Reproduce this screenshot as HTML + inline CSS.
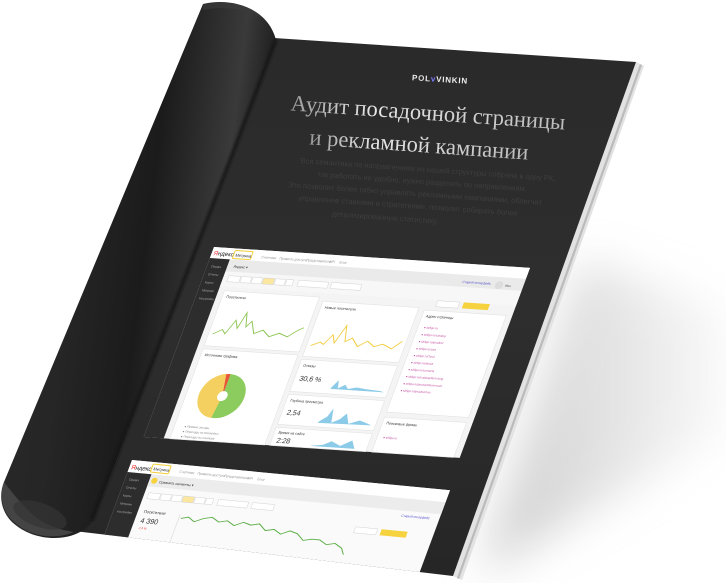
<!DOCTYPE html>
<html><head><meta charset="utf-8"><style>
html,body{margin:0;padding:0;background:#fff;width:726px;height:583px;overflow:hidden}
svg{display:block;overflow:hidden}
</style></head><body>
<svg width="726" height="583" viewBox="0 0 726 583" xmlns="http://www.w3.org/2000/svg" font-family="Liberation Sans, sans-serif">
<defs>
<filter id="bl" x="-50%" y="-50%" width="200%" height="200%"><feGaussianBlur stdDeviation="22"/></filter>
<filter id="bl2"><feGaussianBlur stdDeviation="1.2"/></filter>
<linearGradient id="sh" x1="0" y1="0" x2="1" y2="0"><stop offset="0" stop-color="#999"/><stop offset="1" stop-color="#f4f4f4"/></linearGradient>
<linearGradient id="curl" x1="0" y1="0" x2="1" y2="0.25">
<stop offset="0" stop-color="#2a2a2a"/><stop offset="0.35" stop-color="#262626"/><stop offset="0.6" stop-color="#1b1b1b"/><stop offset="0.85" stop-color="#3a3a3a"/><stop offset="1" stop-color="#151515"/></linearGradient>
<linearGradient id="pg" x1="0" y1="0" x2="0" y2="1"><stop offset="0" stop-color="#2a2a2a"/><stop offset="0.5" stop-color="#2e2e2e"/><stop offset="1" stop-color="#262626"/></linearGradient>
<linearGradient id="tt" x1="0" y1="0" x2="1" y2="0"><stop offset="0" stop-color="#999"/><stop offset="0.3" stop-color="#e6e6e6"/><stop offset="1" stop-color="#bbb"/></linearGradient>
<clipPath id="pc"><polygon points="274,38 636,62 453,576 74,531"/></clipPath>
</defs>

<!-- shadow -->
<polygon points="580,260 726,310 726,430 480,575 530,420" fill="url(#sh)" filter="url(#bl)" opacity="0.5"/>

<!-- page edges (thickness) -->
<polygon points="636,62 644,66 462,580 453,576" fill="#e2e2e2"/>
<polygon points="640,64 642,65 459,579 457,578" fill="#bbb"/>

<!-- page -->
<polygon points="274,38 636,62 453,576 74,531" fill="url(#pg)"/>

<!-- logo -->
<text x="440" y="82" font-size="8" font-weight="bold" fill="#eee" text-anchor="middle" transform="rotate(3.5 440 80)" letter-spacing="0.8">P<tspan fill="#ddd">O</tspan>L<tspan fill="#7b7bff">v</tspan>VINKIN</text>

<!-- title -->
<g font-family="Liberation Serif, serif" fill="url(#tt)" text-anchor="middle" font-size="22.5">
<text x="428" y="120" transform="rotate(4 428 113)">Аудит посадочной страницы</text>
<text x="419" y="152" transform="rotate(4 419 145)">и рекламной кампании</text>
</g>
<g fill="#3e3e3e" font-size="7.5" text-anchor="middle">
<text x="428" y="172" transform="rotate(4 428 170)">Вся семантика по направлениям из нашей структуры собрана в одну РК,</text>
<text x="422" y="184" transform="rotate(4 422 182)">так работать не удобно, нужно разделить по направлениям.</text>
<text x="415" y="196" transform="rotate(4 415 194)">Это позволит более гибко управлять рекламными кампаниями, облегчит</text>
<text x="408" y="208" transform="rotate(4 408 206)">управление ставками и стратегиями, позволит собирать более</text>
<text x="385" y="220" transform="rotate(4 385 218)">детализированную статистику.</text>
</g>

<!-- screenshot 1 -->
<g transform="matrix(1 0.066 -0.37 1 214 247)">
<rect x="0" y="0" width="316" height="190" fill="#f4f4f4"/>
<rect x="0" y="0" width="316" height="11" fill="#fff"/>
<text x="2" y="8" font-size="6" fill="#222"><tspan fill="#e22">Я</tspan>ндекс</text>
<rect x="22" y="2" width="18" height="8" rx="1" fill="#fff" stroke="#f2cf3a" stroke-width="1"/>
<text x="24" y="8" font-size="4" fill="#333">Метрика</text>
<g font-size="3.5" fill="#999"><text x="50" y="8">Счетчики</text><text x="68" y="8">Правила доступа</text><text x="95" y="8">Представители</text><text x="118" y="8">API</text><text x="128" y="8">Блог</text></g>
<rect x="0" y="11" width="20" height="179" fill="#2d2d2d"/>
<g font-size="3" fill="#aaa"><text x="4" y="20">Сводка</text><text x="4" y="28">Отчеты</text><text x="4" y="36">Карты</text><text x="4" y="44">Метрики</text><text x="4" y="52">Настройки</text></g>
<rect x="20" y="11" width="296" height="12" fill="#eaeaea"/>
<text x="26" y="19" font-size="3.5" fill="#333">Яндекс ▾</text>
<text x="255" y="19" font-size="3.2" fill="#55c">Старый интерфейс</text>
<circle cx="292" cy="19" r="4" fill="#ddd"/><text x="298" y="20" font-size="3" fill="#555">Имя</text>
<rect x="20" y="23" width="296" height="15" fill="#f7f7f7"/>
<g fill="#fff" stroke="#ccc" stroke-width="0.4"><rect x="25" y="27" width="12" height="6"/><rect x="38" y="27" width="10" height="6"/><rect x="49" y="27" width="10" height="6"/><rect x="60" y="27" width="11" height="6" fill="#fbe7a0"/><rect x="72" y="27" width="10" height="6"/><rect x="83" y="27" width="7" height="6"/><rect x="95" y="27" width="30" height="6"/><rect x="128" y="27" width="30" height="6"/><rect x="238" y="38" width="22" height="6"/></g>
<rect x="264" y="38" width="26" height="6" fill="#f5d23e"/>
<g fill="#fff" stroke="#e3e3e3" stroke-width="0.6">
<rect x="26" y="42" width="95" height="55"/><rect x="126" y="46" width="96" height="55"/><rect x="228" y="48" width="82" height="102"/>
<rect x="26" y="100" width="95" height="90"/><rect x="126" y="104" width="96" height="32"/><rect x="126" y="139" width="96" height="30"/><rect x="126" y="172" width="96" height="18"/><rect x="228" y="155" width="82" height="35"/></g>
<g font-size="3.6" fill="#333"><text x="30" y="49">Посетители</text><text x="130" y="53">Новые посетители</text><text x="232" y="55">Адрес страницы</text><text x="30" y="107">Источники трафика</text><text x="130" y="111">Отказы</text><text x="130" y="146">Глубина просмотра</text><text x="130" y="178">Время на сайте</text><text x="232" y="162">Поисковые фразы</text></g>
<polyline points="30,85 38,80 42,84 48,70 52,78 56,62 60,76 64,70 70,82 78,78 86,84 95,80 104,83 112,76 117,73" fill="none" stroke="#8cc552" stroke-width="0.9"/>
<polyline points="130,90 138,86 142,88 148,78 152,86 158,68 162,84 168,80 176,88 184,82 192,87 200,84 210,88 218,80" fill="none" stroke="#f2cb3b" stroke-width="0.9"/>
<g font-size="4" fill="#333"><text x="131" y="125" font-size="7">30,6 %</text><text x="131" y="159" font-size="7">2,54</text><text x="131" y="187" font-size="7">2:28</text></g>
<polygon points="165,130 170,122 172,130 178,126 182,130 190,128 200,129 215,130 218,131 165,131" fill="#8ccbe8"/>
<polygon points="165,164 172,158 175,150 178,164 185,160 190,154 195,164 205,160 212,162 218,164 165,165" fill="#8ccbe8"/>
<polygon points="165,188 178,186 185,182 195,186 205,180 210,188 218,188" fill="#8ccbe8"/>
<circle cx="62" cy="145" r="22" fill="#8ccc5e"/>
<path d="M62,145 L62,123 A22,22 0 0 0 59,167 Z" fill="#f4d060"/>
<path d="M62,145 L58,123.4 A22,22 0 0 1 62,123 Z" fill="#e8533c"/>
<circle cx="62" cy="145" r="5" fill="#fff"/>
<g fill="#888" font-size="3"><text x="36" y="178">● Прямые заходы</text><text x="36" y="183">● Переходы из поисковых</text><text x="36" y="188">● Переходы по ссылкам</text></g>
<g fill="#c04f9e" font-size="3">
<text x="234" y="66">● sirligo.ru</text><text x="234" y="73">● sirligo.ru/catalog</text><text x="234" y="80">● sirligo.ru/product</text><text x="234" y="87">● sirligo.ru/cart</text><text x="234" y="94">● sirligo.ru/?p=2</text><text x="234" y="101">● sirligo.ru/about</text><text x="234" y="108">● sirligo.ru/contacts</text><text x="234" y="115">● sirligo.ru/catalog/item-long</text><text x="234" y="122">● sirligo.ru/product/item-more</text><text x="234" y="129">● sirligo.ru/product/xxx</text><text x="234" y="176">● sirligo.ru</text></g>
</g>

<!-- screenshot 2 -->
<g clip-path="url(#pc)">
<g transform="matrix(1 0.095 -0.37 1 132 460)">
<rect x="0" y="0" width="318" height="130" fill="#fafafa"/>
<rect x="0" y="0" width="318" height="12" fill="#fff"/>
<text x="2" y="9" font-size="6" fill="#222"><tspan fill="#e22">Я</tspan>ндекс</text>
<rect x="22" y="2" width="18" height="8" rx="1" fill="#fff" stroke="#f2cf3a" stroke-width="1"/>
<text x="24" y="8" font-size="4" fill="#333">Метрика</text>
<g font-size="3.5" fill="#999"><text x="50" y="8">Счетчики</text><text x="68" y="8">Правила доступа</text><text x="95" y="8">Представители</text><text x="118" y="8">API</text><text x="128" y="8">Блог</text></g>
<rect x="0" y="12" width="24" height="118" fill="#2d2d2d"/>
<g font-size="3" fill="#aaa"><text x="4" y="20">Сводка</text><text x="4" y="28">Отчеты</text><text x="4" y="36">Карты</text><text x="4" y="44">Метрики</text><text x="4" y="52">Настройки</text></g>
<rect x="24" y="12" width="294" height="12" fill="#ececec"/>
<circle cx="29" cy="18" r="3" fill="#f5d23e"/>
<text x="34" y="20" font-size="3.5" fill="#333">Сравнить сегменты ▾</text>
<text x="280" y="30" font-size="3.2" fill="#55c">Старый интерфейс</text>
<g fill="#fff" stroke="#ccc" stroke-width="0.4"><rect x="28" y="30" width="12" height="6"/><rect x="41" y="30" width="10" height="6"/><rect x="52" y="30" width="10" height="6"/><rect x="63" y="30" width="11" height="6" fill="#fbe7a0"/><rect x="75" y="30" width="10" height="6"/><rect x="86" y="30" width="7" height="6"/><rect x="98" y="30" width="30" height="6"/><rect x="132" y="30" width="22" height="6"/><rect x="240" y="44" width="22" height="6"/></g>
<rect x="266" y="44" width="26" height="6" fill="#f5d23e"/>
<text x="30" y="50" font-size="4" fill="#333">Посетители</text>
<text x="30" y="60" font-size="7" fill="#333">4 390</text>
<text x="30" y="66" font-size="3" fill="#e33">-7,4 %</text>
<polyline points="68,52 75,50 82,54 90,50 98,48 106,52 114,50 122,54 130,50 138,52 146,50 154,56 162,54 170,58 178,54 186,56 194,62 202,60 210,60 218,64 226,62 234,66 238,72" fill="none" stroke="#5fb04a" stroke-width="0.9"/>
<line x1="66" y1="48" x2="66" y2="78" stroke="#ccc" stroke-width="0.4"/>
<text x="30" y="84" font-size="3.6" fill="#333">Новые посетители</text>
</g>
</g>

<!-- curl -->
<path d="M203,4 C232,-3 268,8 276,40 L95,515 C88,540 40,548 12,522 C0,510 -1,494 4,482 Z" fill="url(#curl)"/>
<path d="M203,4 C225,0 250,4 262,18 C245,8 220,6 203,10 Z" fill="#3c3c3c" opacity="0.6"/>
<path d="M4,482 C-1,496 2,512 14,522 C30,537 55,540 74,532 C60,530 40,524 28,510 C18,500 10,490 4,482 Z" fill="#444"/>
<ellipse cx="40" cy="515" rx="28" ry="12" transform="rotate(20 40 515)" fill="#353535" opacity="0.7"/>
<line x1="276" y1="40" x2="92" y2="520" stroke="#151515" stroke-width="3" filter="url(#bl2)"/>
</svg>
</body></html>
